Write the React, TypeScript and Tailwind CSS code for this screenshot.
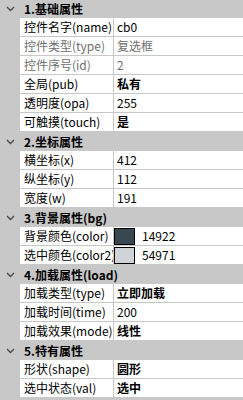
type Row = {
  label: string;
  value: string;
  bold?: boolean;
  disabled?: boolean;
  swatch?: string;
};

type Section = {
  title: string;
  rows: Row[];
};

const sections: Section[] = [
  {
    title: "1.基础属性",
    rows: [
      { label: "控件名字(name)", value: "cb0" },
      { label: "控件类型(type)", value: "复选框", disabled: true },
      { label: "控件序号(id)", value: "2", disabled: true },
      { label: "全局(pub)", value: "私有", bold: true },
      { label: "透明度(opa)", value: "255" },
      { label: "可触摸(touch)", value: "是", bold: true },
    ],
  },
  {
    title: "2.坐标属性",
    rows: [
      { label: "横坐标(x)", value: "412" },
      { label: "纵坐标(y)", value: "112" },
      { label: "宽度(w)", value: "191" },
    ],
  },
  {
    title: "3.背景属性(bg)",
    rows: [
      { label: "背景颜色(color)", value: "14922", swatch: "bg-[#384850]" },
      { label: "选中颜色(color2)", value: "54971", swatch: "bg-[#d0d4d8]" },
    ],
  },
  {
    title: "4.加载属性(load)",
    rows: [
      { label: "加载类型(type)", value: "立即加载", bold: true },
      { label: "加载时间(time)", value: "200" },
      { label: "加载效果(mode)", value: "线性", bold: true },
    ],
  },
  {
    title: "5.特有属性",
    rows: [
      { label: "形状(shape)", value: "圆形", bold: true },
      { label: "选中状态(val)", value: "选中", bold: true },
    ],
  },
];

function Chevron() {
  return (
    <svg className="w-[9px] h-[6px]" viewBox="0 0 9 6" fill="none">
      <path d="M1 1l3.5 3.5L8 1" stroke="#4a4a4a" strokeWidth={1.4} />
    </svg>
  );
}

function SectionHeader({ title, first }: { title: string; first: boolean }) {
  return (
    <div className={`flex items-center bg-[#c8c8c8] ${first ? "h-[18px]" : "h-[19px]"}`}>
      <div className="w-[20px] flex justify-center pl-[1px]">
        <Chevron />
      </div>
      <span className="pl-[4px] font-bold text-black">{title}</span>
    </div>
  );
}

function PropRow({ row }: { row: Row }) {
  const color = row.disabled ? "text-[#707070]" : "text-black";
  return (
    <div className="flex h-[19px]">
      <div className="w-[20px] shrink-0 bg-[#c8c8c8]" />
      <div
        className={`w-[94px] shrink-0 h-[19px] bg-white border-b border-r border-[#c8c8c8] pl-[4px] overflow-hidden whitespace-nowrap leading-[18px] ${color}`}
      >
        {row.label}
      </div>
      <div
        className={`flex-1 flex items-center h-[19px] bg-white border-b border-[#c8c8c8] leading-[18px] whitespace-nowrap ${color} ${
          row.bold ? "font-bold" : ""
        }`}
      >
        {row.swatch ? (
          <>
            <div className={`w-[21px] h-[17px] border border-black ${row.swatch}`} />
            <span className="pl-[7px]">{row.value}</span>
          </>
        ) : (
          <span className="pl-[3px]">{row.value}</span>
        )}
      </div>
    </div>
  );
}

export default function App() {
  return (
    <div
      className="w-[243px] h-[400px] bg-[#c8c8c8] text-[12px] overflow-hidden"
      style={{ fontFamily: '"Noto Sans CJK SC", "Noto Sans", sans-serif' }}
    >
      {sections.map((s, i) => (
        <div key={s.title}>
          <SectionHeader title={s.title} first={i === 0} />
          {s.rows.map((r) => (
            <PropRow key={r.label} row={r} />
          ))}
        </div>
      ))}
    </div>
  );
}
